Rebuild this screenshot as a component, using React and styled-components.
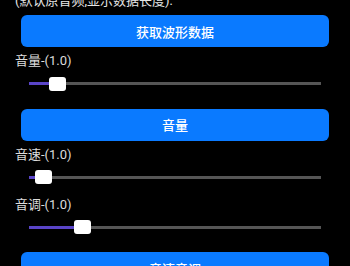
import styled, { createGlobalStyle } from "styled-components";

const GlobalStyle = createGlobalStyle`
  body {
    margin: 0;
    background: #000;
    font-family: Roboto, "Noto Sans CJK SC", sans-serif;
    overflow: hidden;
  }
`

const sliders = {
  volume: 0.0976,
  speed: 0.051,
  pitch: 0.183,
}

const Slider = ({ value }) => (
  <SliderBox>
    <Track>
      <Fill style={{ width: `${value * 100}%` }} />
    </Track>
    <Thumb style={{ left: `calc(${value * 100}% - 8.5px)` }} />
  </SliderBox>
)

const App = () => {
  return (
    <Page>
      <GlobalStyle />
      <Intro>(默认原音频,显示数据长度):</Intro>
      <Button>获取波形数据</Button>
      <Label>音量-(1.0)</Label>
      <Slider value={sliders.volume} />
      <Button $gap>音量</Button>
      <Label>音速-(1.0)</Label>
      <Slider value={sliders.speed} />
      <Label>音调-(1.0)</Label>
      <Slider value={sliders.pitch} />
      <Button $gap>音速音调</Button>
    </Page>
  )
}

export default App;

const Page = styled.div`
  display: flex;
  flex-direction: column;
  width: 350px;
  height: 266px;
  overflow: hidden;
  background: #000;
`

const Intro = styled.p`
  margin: -8px 0 0 15px;
  font-size: 13px;
  line-height: 18px;
  color: #e6e6e6;
`

const Button = styled.div`
  display: flex;
  flex-shrink: 0;
  align-items: center;
  justify-content: center;
  height: 32px;
  margin: ${(p) => (p.$gap ? "11.5px" : "5px")} 21px 0;
  border-radius: 6px;
  background: #0a7aff;
  color: #fff;
  font-size: 13px;
  font-weight: 500;
`

const Label = styled.p`
  margin: 5px 0 0 15px;
  font-size: 13px;
  line-height: 18px;
  color: #dcdcdc;
`

const SliderBox = styled.div`
  position: relative;
  flex-shrink: 0;
  display: flex;
  align-items: center;
  height: 27px;
  margin: 0 29px;
`

const Track = styled.div`
  position: relative;
  width: 100%;
  height: 3px;
  background: #555;
`

const Fill = styled.div`
  height: 100%;
  background: #5a45c8;
`

const Thumb = styled.div`
  position: absolute;
  top: 50%;
  width: 17px;
  height: 14px;
  transform: translateY(-50%);
  border-radius: 3px;
  background: #fff;
`
